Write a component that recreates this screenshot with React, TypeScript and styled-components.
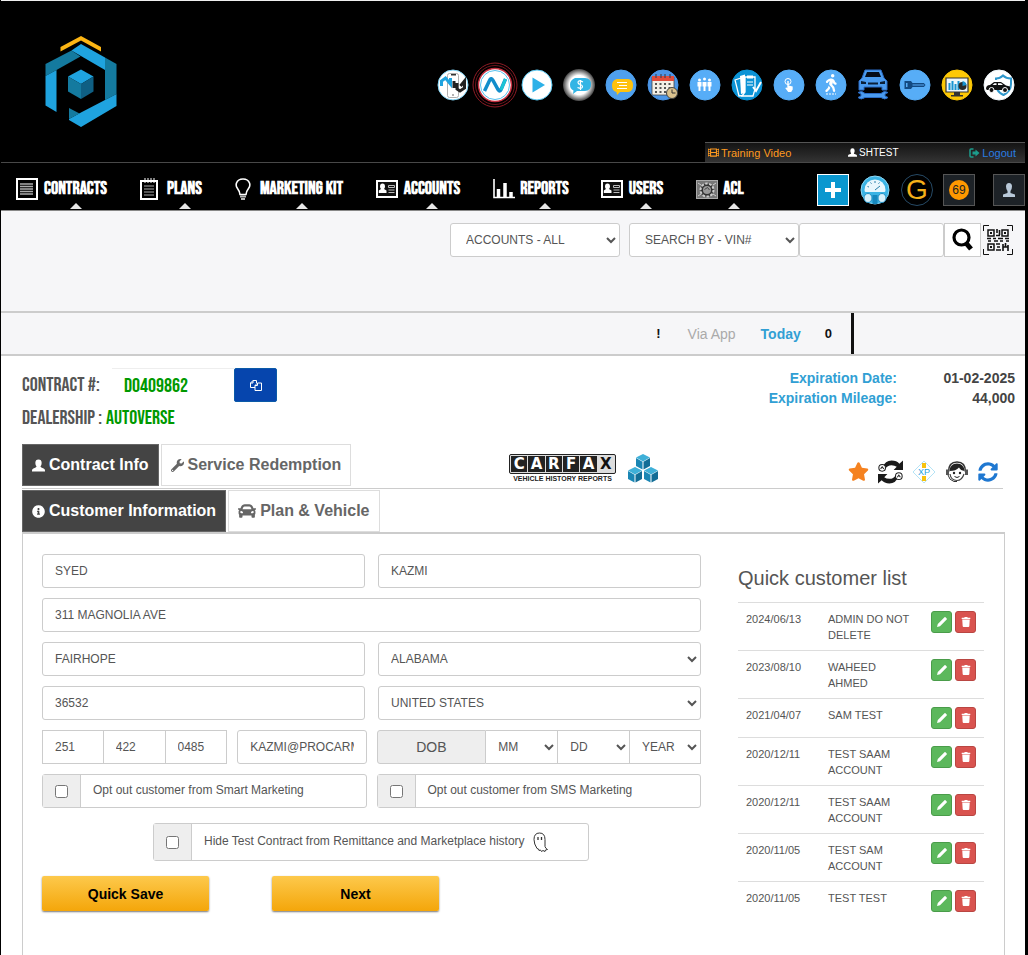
import React from "react";
import styled, { createGlobalStyle, css } from "styled-components";
import {
  FaStar,
  FaWrench,
  FaInfoCircle,
  FaCar,
  FaFilm,
  FaWalking,
  FaSyncAlt,
  FaTrash,
} from "react-icons/fa";

const sans = `"Liberation Sans", Arial, Helvetica, sans-serif`;
const narrow = `"Bebas Neue", "Noto Sans ExtraCondensed", "Open Sans Condensed", "Roboto Condensed", "Liberation Sans Narrow", sans-serif`;

const Global = createGlobalStyle`
  * { box-sizing: border-box; }
  body { margin: 0; background: #fff; font-family: ${sans}; font-size: 12px; color: #555; }
  button, input, select { font-family: inherit; font-size: inherit; color: inherit; margin: 0; }
  button { cursor: pointer; }
  a { color: inherit; text-decoration: none; }
  svg { display: block; flex: none; }
`;

const Page = styled.div`
  min-height: 100vh;
  display: flex;
  flex-direction: column;
  border-left: 1px solid #000;
  border-right: 3px solid #000;
`;

/* ---------- header ---------- */

const Header = styled.header`
  border-top: 1px solid #eee;
  background: #000;
  display: flex;
  justify-content: space-between;
  align-items: stretch;
  border-bottom: 1px solid #484848;
`;

const LogoLink = styled.a`
  padding: 35px 0 34px 44px;
`;

const HeaderSide = styled.div`
  display: flex;
  flex-direction: column;
  justify-content: space-between;
  align-items: flex-end;
`;

const AppIcons = styled.nav`
  display: flex;
  padding: 63px 5px 0 0;
`;

const AppIcon = styled.a`
  width: 42px;
  height: 42px;
  display: flex;
  align-items: center;
  justify-content: center;
`;

const UtilityBar = styled.div`
  width: 320px;
  height: 20px;
  padding: 0 9px 0 3px;
  display: flex;
  align-items: center;
  justify-content: space-between;
  font-size: 11px;
  border-top: 1px solid #555;
  background: linear-gradient(#141414, #333);
`;

const UtilityLink = styled.a<{ $color: string }>`
  display: flex;
  align-items: center;
  gap: 2px;
  color: ${(p) => p.$color};
`;

const AccountLink = styled(UtilityLink)`
  margin-right: 14px;
  font-size: 10px;
`;

/* ---------- main navigation ---------- */

const NavBar = styled.div`
  height: 48px;
  background: #000;
  border-bottom: 1px solid #888;
  display: flex;
  justify-content: space-between;
  align-items: flex-start;
`;

const NavList = styled.nav`
  display: flex;
  gap: 32px;
  padding-left: 15px;
`;

const NavLink = styled.a`
  display: flex;
  gap: 5px;
  height: 46px;
  padding-top: 15px;
  color: #fff;
`;

const NavLabel = styled.span<{ $w: number }>`
  width: ${(p) => p.$w}px;
  display: flex;
  flex-direction: column;
  align-items: center;
  justify-content: space-between;
  white-space: nowrap;
  font-family: ${narrow};
  font-weight: bold;
  font-size: 18px;
  line-height: 22px;
`;

const Caret = styled.i`
  border: 6px solid transparent;
  border-top: 0;
  border-bottom-color: #e8e8e8;
`;

const NavTools = styled.div`
  display: flex;
  align-items: center;
  gap: 10px;
  padding-top: 11px;
`;

const ToolButton = styled.button<{ $kind: "add" | "round" | "box" | "plain" }>`
  width: 32px;
  height: 32px;
  padding: 0;
  display: grid;
  place-items: center;
  background: #000;
  border: 0;
  ${(p) => p.$kind === "add" && css`background: #0a97cf; border: 1px solid #fff;`}
  ${(p) => p.$kind === "box" && css`background: #1d2227; border: 1px solid #555;`}
  ${(p) =>
    p.$kind === "round" &&
    css`border-radius: 50%; border: 1px solid #264a66; color: #f5b01a; font-size: 28px; line-height: 28px;`}
`;

const CountBadge = styled.span`
  width: 20px;
  height: 20px;
  border-radius: 50%;
  background: #ff9800;
  color: #222;
  font-size: 12px;
  line-height: 20px;
`;

const ProfileSlot = styled.div`
  margin-left: 8px;
`;

/* ---------- search ---------- */

const field = css`
  height: 34px;
  background: #fff;
  border: 1px solid #ccc;
  border-radius: 3px;
  color: #555;
  font-size: 12px;
  min-width: 0;
`;

const Input = styled.input`
  ${field}
  width: 100%;
  padding: 0 12px;
`;

const Select = styled.select`
  ${field}
  width: 100%;
  padding: 0 0 0 8px;
`;

const SearchBar = styled.form`
  height: 102px;
  padding: 12px 12px 0;
  background: #f6f6f8;
  border-bottom: 2px solid #ccc;
  display: flex;
  justify-content: flex-end;
`;

const SearchSelect = styled.div`
  width: 170px;
  & + & { margin-left: 9px; }
  select { padding-left: 11px; }
`;

const SearchText = styled.div`
  width: 145px;
`;

const SearchButton = styled.button`
  ${field}
  width: 37px;
  padding: 0;
  margin-right: 2px;
  border-radius: 0;
  display: grid;
  place-items: center;
`;

const QrButton = styled.button`
  width: 30px;
  height: 34px;
  padding: 0;
  border: 0;
  background: none;
`;

const StatusBar = styled.div`
  height: 43px;
  background: #f6f6f8;
  border-bottom: 2px solid #ccc;
  padding-right: 171px;
  display: flex;
  justify-content: flex-end;
  font-size: 14px;
  line-height: 42px;
  color: #aaa;
`;

const Today = styled.strong`
  color: #319fd4;
  margin: 0 24px 0 25px;
`;

const Alert = styled.strong`
  color: #111;
  font-size: 13px;
  margin-right: 27px;
`;

const Count = styled.strong`
  color: #111;
  font-size: 13px;
  padding-right: 19px;
  border-right: 3px solid #111;
`;

/* ---------- contract summary ---------- */

const Main = styled.main`
  flex: 1;
  display: flex;
  flex-direction: column;
  padding: 12px 20px 0 21px;
`;

const Summary = styled.section`
  display: flex;
  justify-content: space-between;
  margin-right: -10px;
  height: 76px;
`;

const ContractLine = styled.div`
  display: flex;
  align-items: center;
  height: 34px;
  font-family: ${narrow};
  font-size: 20px;
  & + & { height: 32px; }
`;

const ContractLabel = styled.label`
  width: 90px;
`;

const ContractInput = styled.input`
  width: 122px;
  height: 34px;
  padding: 0 12px;
  border: 0;
  border-top: 1px solid #eee;
  color: #090;
`;

const CopyButton = styled.button`
  width: 43px;
  height: 34px;
  padding: 0;
  border: 1px solid #0b5aa8;
  border-radius: 2px;
  background: #0645ad;
  display: grid;
  place-items: center;
`;

const Dealer = styled.span`
  color: #090;
  margin-left: 4px;
`;

const Expiration = styled.dl`
  margin: 0;
  display: grid;
  grid-template-columns: auto 118px;
  align-content: start;
  text-align: right;
  font-size: 14px;
  font-weight: bold;
  line-height: 20px;
  dt { color: #319fd4; }
  dd { margin: 0; color: #444; }
`;

/* ---------- tabs ---------- */

const TabRow = styled.div<{ $outer?: boolean }>`
  display: flex;
  gap: 2px;
  margin-right: ${(p) => (p.$outer ? 2 : 0)}px;
  height: ${(p) => (p.$outer ? 45 : 42)}px;
  border-bottom: ${(p) => (p.$outer ? "1px solid #ccc" : "0")};
  margin-bottom: ${(p) => (p.$outer ? 1 : 0)}px;
`;

const Tab = styled.button<{ $active?: boolean }>`
  height: 42px;
  padding: 0 9px;
  display: flex;
  align-items: center;
  gap: 4px;
  border: 1px solid ${(p) => (p.$active ? "#666" : "#ddd")};
  background: ${(p) => (p.$active ? "#444" : "#fff")};
  color: ${(p) => (p.$active ? "#fff" : "#666")};
  font-size: 16px;
  font-weight: bold;
  white-space: nowrap;
`;

const Partners = styled.div`
  display: flex;
  gap: 12px;
  padding-top: 10px;
  margin-left: auto;
`;

const Actions = styled.div`
  display: flex;
  align-items: center;
  gap: 9px;
  padding: 13px 5px 0 0;
  margin-left: 188px;
  height: 42px;
`;

/* ---------- form ---------- */

const Panel = styled.section`
  flex: 1;
  border: solid #ccc;
  border-width: 2px 1px 0;
  padding: 20px 20px 40px 19px;
  display: grid;
  grid-template-columns: 659fr 246fr;
  gap: 37px;
`;

const Form = styled.form`
  display: flex;
  flex-direction: column;
  gap: 10px;
`;

const Pair = styled.div<{ $gap: number }>`
  display: grid;
  grid-template-columns: repeat(2, minmax(0, 1fr));
  gap: ${(p) => p.$gap}px;
`;

const Cluster = styled.div<{ $cols: string }>`
  display: grid;
  grid-template-columns: ${(p) => p.$cols};
  & > input, & > select { border-radius: 0; }
  & > * + input, & > * + select { border-left-width: 0; }
`;

const PhoneRow = styled.div`
  display: grid;
  grid-template-columns: 185fr 129fr;
  gap: 10px;
`;

const DobLabel = styled.span`
  border: 1px solid #ccc;
  border-radius: 3px 0 0 3px;
  background: #eee;
  font-size: 14px;
  line-height: 32px;
  text-align: center;
`;

const CheckRow = styled.label<{ $tall?: boolean }>`
  display: flex;
  align-items: center;
  height: ${(p) => (p.$tall ? 38 : 34)}px;
  margin: ${(p) => (p.$tall ? "5px 112px 5px 111px" : "0")};
  border: 1px solid #ccc;
  border-radius: 3px;
  line-height: 14px;
`;

const CheckText = styled.span`
  padding-bottom: 2px;
`;

const CheckCell = styled.span`
  width: 38px;
  height: 100%;
  display: grid;
  place-items: center;
  background: #eee;
  border-right: 1px solid #ccc;
  margin-right: 12px;
`;

const CheckBox = styled.input`
  width: 13px;
  height: 13px;
`;

const GhostSlot = styled.span`
  margin-left: 8px;
`;

const FormButtons = styled.div`
  display: flex;
  gap: 63px;
`;

const GoldButton = styled.button`
  width: 167px;
  height: 35px;
  padding: 0;
  border: 0;
  border-radius: 2px;
  background: linear-gradient(#fdc94c, #f4a60a);
  box-shadow: 0 1px 2px #777;
  color: #000;
  font-size: 14px;
  font-weight: bold;
`;

/* ---------- quick list ---------- */

const QuickTitle = styled.h2`
  margin: 12px 0;
  font-size: 20px;
  line-height: 24px;
  font-weight: normal;
`;

const QuickTable = styled.table`
  width: 100%;
  table-layout: fixed;
  border-collapse: collapse;
  font-size: 11px;
  line-height: 16px;
  td {
    vertical-align: top;
    padding: 8px 8px 7px;
    border-top: 1px solid #ddd;
  }
`;

const Col = styled.col<{ $w: string }>`
  width: ${(p) => p.$w};
`;

const RowButtons = styled.div`
  display: flex;
  gap: 3px;
  height: 23px;
`;

const RowButton = styled.button<{ $bg: string; $edge: string }>`
  width: 21px;
  height: 22px;
  padding: 0;
  display: grid;
  place-items: center;
  color: #fff;
  background: ${(p) => p.$bg};
  border: 1px solid ${(p) => p.$edge};
  border-radius: 3px;
`;

/* ---------- drawings ---------- */

const Logo = () => (
  <svg width="72" height="92" viewBox="0 0 72 92" role="img" aria-label="Home">
    <path d="M15.500 11 36 0l20 11v4.500L36 4.500l-20.500 11z" fill="#fcb514" />
    <path d="M.5 28 26.500 14.500l9 6L11.500 34 .5 40z" fill="#147a9f" />
    <path d="M26.500 14.500 36 8l24 13.500V34z" fill="#1fa3df" />
    <path d="M60 21.500 71.500 28v30L60 64z" fill="#147a9f" />
    <path d="M71.500 58v12L36 91l-12-7v-1l11-6 25-13z" fill="#1fa3df" />
    <path d="M24 72l10.500 5.500L24 83z" fill="#147a9f" />
    <path d="M.5 40l11-6v42L.5 69.500z" fill="#1fa3df" />
    <path d="M36 33.500 48.500 40.500 36 48 23 40.500z" fill="#1fa3df" />
    <path d="M23 40.500 36 48v15l-13-7.500z" fill="#147a9f" />
    <path d="M48.500 40.500 36 48v15l12.500-7.500z" fill="#0f5f83" />
  </svg>
);

const Disc = ({ fill, ring, children }: { fill: string; ring?: string; children?: React.ReactNode }) => (
  <svg width="32" height="32" viewBox="0 0 32 32" aria-hidden="true">
    <circle cx="16" cy="16" r="15" fill={fill} stroke={ring ?? fill} />
    {children}
  </svg>
);

const PhoneChart = () => (
  <Disc fill="#fff" ring="#7fd3f5">
    <rect x="10.500" y="4.500" width="11" height="24" rx="2" fill="#fff" stroke="#999" strokeWidth=".8" />
    <path d="M14 5h5v1.500h-5z" fill="#333" />
    <path d="M4.500 17v-5l4-3 5 6V9" fill="none" stroke="#1fa3df" strokeWidth="3" />
    <path d="M17 12v7M20 14v6l3 2 4.500-3v-7l-4 5" fill="none" stroke="#222" strokeWidth="3" />
    <circle cx="16" cy="26" r="1" fill="#999" />
  </Disc>
);

const NeonWave = () => (
  <svg width="46" height="46" viewBox="0 0 46 46" aria-hidden="true">
    <circle cx="23" cy="23" r="22" fill="none" stroke="#8e1c26" />
    <circle cx="23" cy="23" r="19.500" fill="none" stroke="#6d141c" />
    <circle cx="23" cy="23" r="16.500" fill="#fff" stroke="#c53040" strokeWidth="1.500" />
    <circle cx="23" cy="23" r="14.500" fill="#fff" stroke="#55c0ee" />
    <path d="M12.500 29 18 17.500q1-2 3 1l5 9q2 3 3 0l4.500-10.500" fill="none" stroke="#128dcb" strokeWidth="3.500" />
    <path d="M29 28l4.500-11" stroke="#1bc5d5" strokeWidth="3" />
  </svg>
);

const DollarBubble = () => (
  <svg width="32" height="32" viewBox="0 0 32 32" aria-hidden="true">
    <defs>
      <radialGradient id="glow">
        <stop offset="60%" stopColor="#fff" />
        <stop offset="100%" stopColor="#444" />
      </radialGradient>
    </defs>
    <circle cx="16" cy="16" r="16" fill="url(#glow)" />
    <path d="M12 9h10q6 0 6 6.500T22 22h-8l-4 3 .5-3.500Q7 20 7 15.500T12 9z" fill="#33b5e5" />
    <path d="M20 13q-5-2.500-5 .5 0 1.500 2.200 2t2.300 2q0 3-5 1M17.500 11v10" fill="none" stroke="#fff" strokeWidth="1.200" />
  </svg>
);

const ChatBubble = () => (
  <Disc fill="#4fa0ee">
    <path d="M12 10h11q5 0 5 6.500T23 23H15l-3 3-.5-3Q7 22 7 16.500T12 10z" fill="#ffc20e" />
    <path d="M12 13.500h10M14 16.500h8M12 19.500h10" stroke="#fff" strokeWidth="1.200" />
  </Disc>
);

const CalendarIcon = () => (
  <Disc fill="#4c96e8">
    <path d="M5 8h22v18H5z" fill="#f3eee6" stroke="#444" strokeWidth=".8" />
    <path d="M5 7h22v5H5z" fill="#e24b3b" />
    <path d="M9 5v4M14 5v4M18 5v4M23 5v4" stroke="#445" strokeWidth="1.200" />
    <path d="M8 15h16M8 19h16M8 23h12" stroke="#555" strokeWidth="1.800" strokeDasharray="2 2.500" />
    <circle cx="25" cy="24" r="5.500" fill="#dbc28f" stroke="#444" />
    <path d="M25 20.500V24h3.500" fill="none" stroke="#333" />
  </Disc>
);

const PeopleIcon = () => (
  <Disc fill="#57adf7">
    {[10.5, 15.5, 20.5].map((x) => (
      <g key={x} fill="#fff">
        <circle cx={x} cy={x === 15.5 ? 10 : 11} r="1.500" />
        <path d={`M${x - 2} 13h4v4.500h-1V22h-2v-4.500h-1z`} />
      </g>
    ))}
  </Disc>
);

const PapersIcon = () => (
  <Disc fill="#0b93d6">
    <path d="M4 11l6-2 6 17-8 1z" fill="none" stroke="#fff" strokeWidth="1.300" />
    <path d="M9 7l5-1.500V24l-4 1z" fill="#fff" />
    <path d="M14 8h10v12l-2 7H11l3-4z" fill="#0b93d6" stroke="#fff" strokeWidth="1.300" />
    <path d="M16 6.500h6v3h-6z" fill="#fff" />
    <path d="M16 13h6M16 16h6" stroke="#fff" />
    <path d="M22 18l3 4 5-9" fill="none" stroke="#fff" strokeWidth="2" />
  </Disc>
);

const TapIcon = () => (
  <Disc fill="#57adf7">
    <circle cx="15" cy="12.500" r="3" fill="none" stroke="#fff" />
    <path d="M14.300 12h1.400v4.500l4 1v3l-1.500 2.500h-3l-3-4 1.500-.5.6.8z" fill="#fff" />
  </Disc>
);

const WalkIcon = () => (
  <Disc fill="#57adf7">
    <g transform="translate(7 5)" color="#fff">
      <FaWalking size={18} />
    </g>
    <path d="M11 25h10" stroke="#fff" strokeDasharray="2 1" />
  </Disc>
);

const ServiceCar = () => (
  <svg width="32" height="32" viewBox="0 0 32 32" aria-hidden="true">
    <path d="M5 9 8 1h16l3 8 3 3v9h-5v-3H7v3H2v-9z" fill="#4a9bef" stroke="#2b6bc4" />
    <path d="M8 8l2-5h12l2 5z" fill="#050c18" />
    <path d="M4 12l5 1v2H4zM28 12l-5 1v2h5zM11 13.500h10v2H11z" fill="#0b2038" />
    <path d="M1 23.500l3 1.500v2l-3 1.500q3 3 7 0h16q4 3 7 0L28 27v-2l3-1.500q-4-2.500-7 1H8q-3-3.500-7-1z" fill="#4a9bef" stroke="#2b6bc4" />
  </svg>
);

const KeyIcon = () => (
  <Disc fill="#57adf7">
    <path d="M5.500 12h6.500l1.500 2v4L12 20H5.500z" fill="#134a82" />
    <path d="M13 14.500h12l1 1.500-1 1.500H13z" fill="#3579bb" stroke="#134a82" />
    <path d="M7 14h1.500v4H7z" fill="#57adf7" />
  </Disc>
);

const MonitorIcon = () => (
  <Disc fill="#fdc806">
    <path d="M5 9h22v14H5z" fill="#eef6fa" stroke="#333" strokeWidth="1.200" />
    <path d="M8.500 21v-7M11.500 21V12M14.500 21v-6M17.500 21v-9" stroke="#1793d1" strokeWidth="2" />
    <circle cx="21.500" cy="17" r="4" fill="#2b2b2b" />
    <path d="M21.500 17v-5a5 5 0 0 1 4 4z" fill="#1793d1" />
    <path d="M13 23h6v3h3v1.500H10V26h3z" fill="#333" />
  </Disc>
);

const InsuredCar = () => (
  <Disc fill="#fff" ring="#eef6fa">
    <path d="M13 11V9.500q4 0 7-3 3 3 8 3V15q0 7-7.500 11Q16 24 14 20" fill="none" stroke="#2e97cc" strokeWidth="2" />
    <path d="M3 20q0-4 4-4l4-3h7l5 3.500 4 1V21H4z" fill="#111" />
    <path d="M9.500 16l2-1.800h2V16zM15 14.200h3l2 1.800h-5z" fill="#fff" />
    <circle cx="8.500" cy="21" r="2.500" fill="#111" stroke="#fff" />
    <circle cx="22" cy="21" r="2.500" fill="#111" stroke="#fff" />
  </Disc>
);

const apps: [string, React.ReactNode][] = [
  ["Mobile analytics", <PhoneChart />],
  ["Network", <NeonWave />],
  ["Play", <Disc fill="#fff" ring="#59c8f2"><path d="M11.500 8.500v15L24 16z" fill="#2cb1e8" /></Disc>],
  ["Payments", <DollarBubble />],
  ["Messages", <ChatBubble />],
  ["Schedule", <CalendarIcon />],
  ["Team", <PeopleIcon />],
  ["Documents", <PapersIcon />],
  ["Click", <TapIcon />],
  ["Walk-in", <WalkIcon />],
  ["Service", <ServiceCar />],
  ["Keys", <KeyIcon />],
  ["Reports", <MonitorIcon />],
  ["Insurance", <InsuredCar />],
];

const UserGlyph = ({ size }: { size: number }) => (
  <svg width={size} height={size} viewBox="0 0 14 14" fill="currentColor" aria-hidden="true">
    <path d="M7 .5q3.400 0 3.400 3.700 0 2.300-1.300 4 .3.700 1 1l2.400.9q1.500.6 1.500 2.200V13.500H0v-1.200q0-1.600 1.500-2.200l2.400-.9q.7-.3 1-1-1.300-1.700-1.300-4Q3.600.5 7 .5z" />
  </svg>
);

const PencilGlyph = () => (
  <svg width="12" height="12" viewBox="0 0 12 12" fill="#fff" aria-hidden="true">
    <path d="M1 11l.8-3L8.500 1.300q.5-.5 1 0l1.200 1.200q.5.5 0 1L4 10.200z" />
  </svg>
);

const SignOut = () => (
  <svg width="11" height="10" viewBox="0 0 11 10" aria-hidden="true">
    <path d="M4.500 1H2Q1 1 1 2v6q0 1 1 1h2.500" fill="none" stroke="#1c9c8c" strokeWidth="1.500" />
    <path d="M3.500 3.500h3v-2L10.500 5 6.500 8.500v-2h-3z" fill="#1c9c8c" />
  </svg>
);

const ListIcon = () => (
  <svg width="22" height="22" viewBox="0 0 22 22" aria-hidden="true">
    <rect x="1" y="1" width="20" height="20" fill="none" stroke="#fff" strokeWidth="2" />
    <path d="M4 6h13M4 8.500h13M4 11h13M4 13.500h13M4 16h13" stroke="#aaa" strokeWidth="1.500" />
  </svg>
);

const NotepadIcon = () => (
  <svg width="21" height="22" viewBox="0 0 21 22" aria-hidden="true">
    <path d="M1 3h16v18H1z" fill="none" stroke="#fff" strokeWidth="2" />
    <path d="M5 0v5M8 0v5M11 0v5M14 0v5" stroke="#fff" />
    <path d="M4 8h10M4 11h10M4 14h10M4 17h10" stroke="#aaa" />
  </svg>
);

const BulbIcon = () => (
  <svg width="19" height="22" viewBox="0 0 19 22" aria-hidden="true">
    <path d="M5 16.500Q4.500 13 2.500 10.500 .5 8 1.500 5 3 1 8 1t6.500 4q1 3-1 5.500-2 2.500-2.500 6z" fill="none" stroke="#fff" strokeWidth="1.600" />
    <path d="M5 18.500h6M6 21h4" stroke="#bbb" strokeWidth="1.800" />
  </svg>
);

const CardIcon = () => (
  <svg width="22" height="22" viewBox="0 0 22 22" aria-hidden="true">
    <rect x="1" y="3" width="20" height="16" fill="#111" stroke="#fff" strokeWidth="2" />
    <path d="M6.500 5.500q2.500 0 2.500 3 0 1.500-1 2.500l2.500 1.500V15H2.800v-2.500L5 11Q4 10 4 8.500q0-3 2.500-3z" fill="#fff" />
    <path d="M12.500 7.500h6v2h-6zM12.500 12h6M12.500 14.500h6" stroke="#bbb" fill="none" />
  </svg>
);

const BarsIcon = () => (
  <svg width="22" height="22" viewBox="0 0 22 22" aria-hidden="true">
    <path d="M1 1v18.500h21" fill="none" stroke="#fff" strokeWidth="1.600" />
    <path d="M5.500 19v-8M12 19V5M18 19v-5" stroke="#fff" strokeWidth="3.500" />
  </svg>
);

const VaultIcon = () => (
  <svg width="22" height="22" viewBox="0 0 22 22" aria-hidden="true">
    <rect x=".5" y="2.500" width="21" height="18" fill="#777" stroke="#aaa" />
    <circle cx="11" cy="12" r="6.500" fill="#333" stroke="#ccc" strokeWidth="2" strokeDasharray="2.500 1.500" />
    <circle cx="11" cy="12" r="4" fill="#999" />
    <path d="M8.500 11.500l3-2 2 2.500" fill="none" stroke="#444" />
    <path d="M2 5l3 2M20 5l-3 2M2 18l3-2M20 18l-3-2" stroke="#ccc" />
  </svg>
);

const navItems: { label: string; icon: React.ReactNode; w: number }[] = [
  { label: "CONTRACTS", icon: <ListIcon />, w: 65 },
  { label: "PLANS", icon: <NotepadIcon />, w: 37 },
  { label: "MARKETING KIT", icon: <BulbIcon />, w: 85 },
  { label: "ACCOUNTS", icon: <CardIcon />, w: 58 },
  { label: "REPORTS", icon: <BarsIcon />, w: 49 },
  { label: "USERS", icon: <CardIcon />, w: 36 },
  { label: "ACL", icon: <VaultIcon />, w: 21 },
];

const GaugeIcon = () => (
  <svg width="30" height="30" viewBox="0 0 30 30" aria-hidden="true">
    <circle cx="15" cy="15" r="14" fill="#3bb3e4" stroke="#8fd8f5" />
    <path d="M4.500 15a10.500 10.500 0 0 1 21 0q0 2-1 2h-19q-1 0-1-2z" fill="#e9f7fd" />
    <path d="M15 15l5-4M7.500 11.500l1.500.5M10.500 7.500l1 1.200M15 6v2M19.500 7.500l-1 1.200" stroke="#2a7fa8" />
    <ellipse cx="8" cy="23" rx="4" ry="4.500" fill="#d8f0fa" stroke="#218fc4" />
    <ellipse cx="22" cy="23" rx="4" ry="4.500" fill="#d8f0fa" stroke="#218fc4" />
    <path d="M12.500 20h5v9h-5z" fill="#1787bd" />
  </svg>
);

const ProfileIcon = () => (
  <svg width="14" height="16" viewBox="0 0 14 16" aria-hidden="true">
    <path d="M7 1q3 0 3 3.500Q10 7 8.500 9v2l4.500 1.500V15H1v-2.500L5.500 11V9Q4 7 4 4.500 4 1 7 1z" fill="#b8c8d8" />
  </svg>
);

const Magnifier = () => (
  <svg width="22" height="24" viewBox="0 0 22 24" aria-hidden="true">
    <circle cx="9.500" cy="9.500" r="7.500" fill="none" stroke="#000" strokeWidth="3.200" />
    <path d="M14 15l5 6" stroke="#000" strokeWidth="5" />
  </svg>
);

const QrIcon = () => (
  <svg width="30" height="30" viewBox="0 0 30 30" fill="none" stroke="#111" aria-hidden="true">
    <path d="M.5 6V.5H6M24 .5h5.500V6M29.500 24v5.500H24M6 29.500H.5V24" />
    <path d="M5 5h6v6H5zM19 5h6v6h-6zM5 19h6v6H5z" strokeWidth="1.500" />
    <path d="M7 8h2M21 8h2M7 22h2" strokeWidth="2" />
    <path d="M14 4v4M16.500 5v5M13 10.500h4M4 13.500h4M10 13.500h3M15 13.500h5M22 13.500h4M5 16h3M11 16h4M17 16h3M23 16h3M13 19h4M14 22h3M13 25h5M20 19v7M22.500 18v4M25 20v6M20 22h5" strokeWidth="1.600" />
  </svg>
);

const CopyIcon = () => (
  <svg width="12" height="11" viewBox="0 0 12 11" fill="none" stroke="#fff" aria-hidden="true">
    <path d="M5 7.500H.5V3L3 .5h3.500V3M3 .500V3H.5" />
    <path d="M5 5.500 7.500 3h4v7.500H5zM7.500 3v2.500H5" />
  </svg>
);

const CarfaxBoard = styled.a`
  width: 107px;
  height: 30px;
  display: flex;
  flex-direction: column;
  align-items: center;
`;

const CarfaxTiles = styled.span`
  width: 107px;
  height: 20px;
  padding: 1px;
  display: grid;
  grid-template-columns: repeat(6, 1fr);
  gap: 1px;
  border: 1px solid #222;
  border-radius: 2px;
  background: #ddd;
`;

const CarfaxTile = styled.b<{ $light?: boolean }>`
  background: ${(p) => (p.$light ? "#ddd" : "#222")};
  color: ${(p) => (p.$light ? "#111" : "#fff")};
  font-family: "DejaVu Sans", sans-serif;
  font-size: 15px;
  line-height: 16px;
  text-align: center;
`;

const CarfaxTag = styled.b`
  color: #222;
  font-size: 7px;
  line-height: 9px;
  white-space: nowrap;
`;

const Cube = ({ x, y }: { x: number; y: number }) => (
  <g transform={`translate(${x} ${y})`}>
    <path d="M7 0l7 3.500-7 4-7-4z" fill="#3fb0d8" />
    <path d="M0 4l6.500 3.700v7.800L0 12z" fill="#1a86b4" />
    <path d="M14 4 7.500 7.700v7.800L14 12z" fill="#126d96" />
  </g>
);

const Cubes = () => (
  <svg width="30" height="30" viewBox="0 0 30 30" aria-hidden="true">
    <Cube x={8} y={0} />
    <Cube x={0} y={13} />
    <Cube x={16} y={13} />
  </svg>
);

const CycleIcon = () => (
  <svg width="25" height="26" viewBox="0 0 24 24" aria-hidden="true">
    <path d="M4 8Q7 1 13 1q5 0 7.500 3L24 1v9h-9l3-3q-2-1.500-5-1.500Q9 5.500 7 9z" fill="#1a1a1a" />
    <path d="M20 16q-3 7-9 7-5 0-7.500-3L0 23v-9h9l-3 3q2 1.500 5 1.500 4 0 6-3.500z" fill="#1a1a1a" />
    <circle cx="4" cy="8" r="3.200" fill="#fff" stroke="#222" />
    <circle cx="20" cy="16" r="3.200" fill="#fff" stroke="#222" />
    <path d="M2.500 9l1.500-2 1.500 2M18.500 17l1.500-2 1.500 2" fill="none" stroke="#222" />
  </svg>
);

const XpIcon = () => (
  <svg width="24" height="24" viewBox="0 0 24 24" aria-hidden="true">
    <path d="M12 1l11 11-11 11L1 12z" fill="#fff" stroke="#b5e3f5" />
    <path d="M10 3h4v5h-4zM10 16h4v5h-4z" fill="#f8c20e" />
    <text x="12" y="15" textAnchor="middle" fontSize="9" fill="#1fa3df" fontFamily="Liberation Sans">XP</text>
  </svg>
);

const AgentIcon = () => (
  <svg width="24" height="22" viewBox="0 0 24 22" aria-hidden="true">
    <path d="M3.500 11Q3.500 1 12 1t8.500 10" fill="none" stroke="#333" strokeWidth="1.500" />
    <path d="M4.500 10Q5 2.500 12 2.500t7.500 7.500q-4-.5-5.500-3.500Q11 10 4.500 10z" fill="#222" />
    <path d="M5 13q1 6.500 7 6.500 5 0 7-6.500" fill="none" stroke="#444" strokeWidth="1.200" />
    <path d="M1 8.500h3v5.500H1zM20 8.500h3v5.500h-3z" fill="#555" />
    <path d="M3 14q1 5 6 6.500h3" fill="none" stroke="#333" />
    <path d="M9.500 15.500q2.500 2 5 0" fill="none" stroke="#222" />
    <circle cx="9" cy="12" r="1.200" fill="#222" />
    <circle cx="15" cy="12" r="1.200" fill="#222" />
  </svg>
);

const Ghost = () => (
  <svg width="16" height="20" viewBox="0 0 16 20" fill="none" stroke="#333" aria-hidden="true">
    <path d="M4 16.500Q1 12 1 7.500 1 1 6.500 1T12 7.500v7q.5 2 2.500 3l-2 .5-.5 1.500-2-1-1.500 1-1-1.500-1.500.5-.5-1.500z" />
    <path d="M5 5v3M8.500 5v3" strokeWidth="1.300" />
  </svg>
);

const customers = [
  ["2024/06/13", "ADMIN DO NOT DELETE"],
  ["2023/08/10", "WAHEED AHMED"],
  ["2021/04/07", "SAM TEST"],
  ["2020/12/11", "TEST SAAM ACCOUNT"],
  ["2020/12/11", "TEST SAAM ACCOUNT"],
  ["2020/11/05", "TEST SAM ACCOUNT"],
  ["2020/11/05", "TEST TEST"],
];

export default function App() {
  return (
    <Page>
      <Global />
      <Header>
        <LogoLink href="#"><Logo /></LogoLink>
        <HeaderSide>
          <AppIcons aria-label="Applications">
            {apps.map(([name, icon]) => (
              <AppIcon key={name} href="#" aria-label={name}>{icon}</AppIcon>
            ))}
          </AppIcons>
          <UtilityBar>
            <UtilityLink href="#" $color="#ff9a1f"><FaFilm size={11} />Training Video</UtilityLink>
            <AccountLink href="#" $color="#fff"><UserGlyph size={9} />SHTEST</AccountLink>
            <UtilityLink href="#" $color="#2a7de1"><SignOut />Logout</UtilityLink>
          </UtilityBar>
        </HeaderSide>
      </Header>

      <NavBar>
        <NavList aria-label="Main">
          {navItems.map((item) => (
            <NavLink key={item.label} href="#">
              {item.icon}
              <NavLabel $w={item.w}>{item.label}<Caret /></NavLabel>
            </NavLink>
          ))}
        </NavList>
        <NavTools>
          <ToolButton $kind="add" aria-label="Add">
            <svg width="18" height="18" viewBox="0 0 18 18"><path d="M9 1v16M1 9h16" stroke="#fff" strokeWidth="4" /></svg>
          </ToolButton>
          <ToolButton $kind="plain" aria-label="Dashboard"><GaugeIcon /></ToolButton>
          <ToolButton $kind="round">G</ToolButton>
          <ToolButton $kind="box"><CountBadge>69</CountBadge></ToolButton>
          <ProfileSlot>
            <ToolButton $kind="box" aria-label="Profile"><ProfileIcon /></ToolButton>
          </ProfileSlot>
        </NavTools>
      </NavBar>

      <SearchBar>
        <SearchSelect>
          <Select aria-label="Accounts"><option>ACCOUNTS - ALL</option></Select>
        </SearchSelect>
        <SearchSelect>
          <Select aria-label="Search by"><option>SEARCH BY - VIN#</option></Select>
        </SearchSelect>
        <SearchText><Input aria-label="Search text" /></SearchText>
        <SearchButton type="button" aria-label="Search"><Magnifier /></SearchButton>
        <QrButton type="button" aria-label="Scan code"><QrIcon /></QrButton>
      </SearchBar>

      <StatusBar>
        <Alert>!</Alert>
        <span>Via App</span>
        <Today>Today</Today>
        <Count>0</Count>
      </StatusBar>

      <Main>
        <Summary>
          <div>
            <ContractLine>
              <ContractLabel htmlFor="contract">CONTRACT #:</ContractLabel>
              <ContractInput id="contract" readOnly value="D0409862" />
              <CopyButton aria-label="Copy"><CopyIcon /></CopyButton>
            </ContractLine>
            <ContractLine>DEALERSHIP :<Dealer>AUTOVERSE</Dealer></ContractLine>
          </div>
          <Expiration>
            <dt>Expiration Date:</dt>
            <dd>01-02-2025</dd>
            <dt>Expiration Mileage:</dt>
            <dd>44,000</dd>
          </Expiration>
        </Summary>

        <TabRow $outer>
          <Tab $active><UserGlyph size={13} />Contract Info</Tab>
          <Tab><FaWrench size={13} />Service Redemption</Tab>
          <Partners>
            <CarfaxBoard href="#">
              <CarfaxTiles>
                {"CARFAX".split("").map((c, i) => (
                  <CarfaxTile key={i} $light={i === 5}>{c}</CarfaxTile>
                ))}
              </CarfaxTiles>
              <CarfaxTag>VEHICLE HISTORY REPORTS</CarfaxTag>
            </CarfaxBoard>
            <Cubes />
          </Partners>
          <Actions>
            <FaStar size={21} color="#f58220" />
            <CycleIcon />
            <XpIcon />
            <AgentIcon />
            <FaSyncAlt size={20} color="#1f78d1" />
          </Actions>
        </TabRow>

        <TabRow>
          <Tab $active><FaInfoCircle size={13} />Customer Information</Tab>
          <Tab><FaCar size={18} />Plan &amp; Vehicle</Tab>
        </TabRow>

        <Panel>
          <Form>
            <Pair $gap={13}>
              <Input aria-label="First name" defaultValue="SYED" />
              <Input aria-label="Last name" defaultValue="KAZMI" />
            </Pair>
            <Input aria-label="Address" defaultValue="311 MAGNOLIA AVE" />
            <Pair $gap={13}>
              <Input aria-label="City" defaultValue="FAIRHOPE" />
              <Select aria-label="State"><option>ALABAMA</option></Select>
            </Pair>
            <Pair $gap={13}>
              <Input aria-label="Zip" defaultValue="36532" />
              <Select aria-label="Country"><option>UNITED STATES</option></Select>
            </Pair>
            <Pair $gap={10}>
              <PhoneRow>
                <Cluster $cols="repeat(3, minmax(0, 1fr))">
                  <Input aria-label="Area code" defaultValue="251" />
                  <Input aria-label="Prefix" defaultValue="422" />
                  <Input aria-label="Line number" defaultValue="0485" />
                </Cluster>
                <Input aria-label="Email" defaultValue="KAZMI@PROCARM" />
              </PhoneRow>
              <Cluster $cols="110fr 72fr 72fr 71fr">
                <DobLabel>DOB</DobLabel>
                <Select aria-label="Birth month"><option>MM</option></Select>
                <Select aria-label="Birth day"><option>DD</option></Select>
                <Select aria-label="Birth year"><option>YEAR</option></Select>
              </Cluster>
            </Pair>
            <Pair $gap={10}>
              <CheckRow>
                <CheckCell><CheckBox type="checkbox" /></CheckCell>
                <CheckText>Opt out customer from Smart Marketing</CheckText>
              </CheckRow>
              <CheckRow>
                <CheckCell><CheckBox type="checkbox" /></CheckCell>
                <CheckText>Opt out customer from SMS Marketing</CheckText>
              </CheckRow>
            </Pair>
            <CheckRow $tall>
              <CheckCell><CheckBox type="checkbox" /></CheckCell>
              <CheckText>Hide Test Contract from Remittance and Marketplace history</CheckText>
              <GhostSlot><Ghost /></GhostSlot>
            </CheckRow>
            <FormButtons>
              <GoldButton type="button">Quick Save</GoldButton>
              <GoldButton type="button">Next</GoldButton>
            </FormButtons>
          </Form>

          <aside>
            <QuickTitle>Quick customer list</QuickTitle>
            <QuickTable>
              <colgroup>
                <Col $w="82px" />
                <Col $w="auto" />
                <Col $w="61px" />
              </colgroup>
              <tbody>
                {customers.map(([date, name], i) => (
                  <tr key={i}>
                    <td>{date}</td>
                    <td>{name}</td>
                    <td>
                      <RowButtons>
                        <RowButton $bg="#5cb85c" $edge="#4a9c4a" aria-label={`Edit ${name}`}><PencilGlyph /></RowButton>
                        <RowButton $bg="#d9534f" $edge="#b94642" aria-label={`Delete ${name}`}><FaTrash size={10} /></RowButton>
                      </RowButtons>
                    </td>
                  </tr>
                ))}
              </tbody>
            </QuickTable>
          </aside>
        </Panel>
      </Main>
    </Page>
  );
}
